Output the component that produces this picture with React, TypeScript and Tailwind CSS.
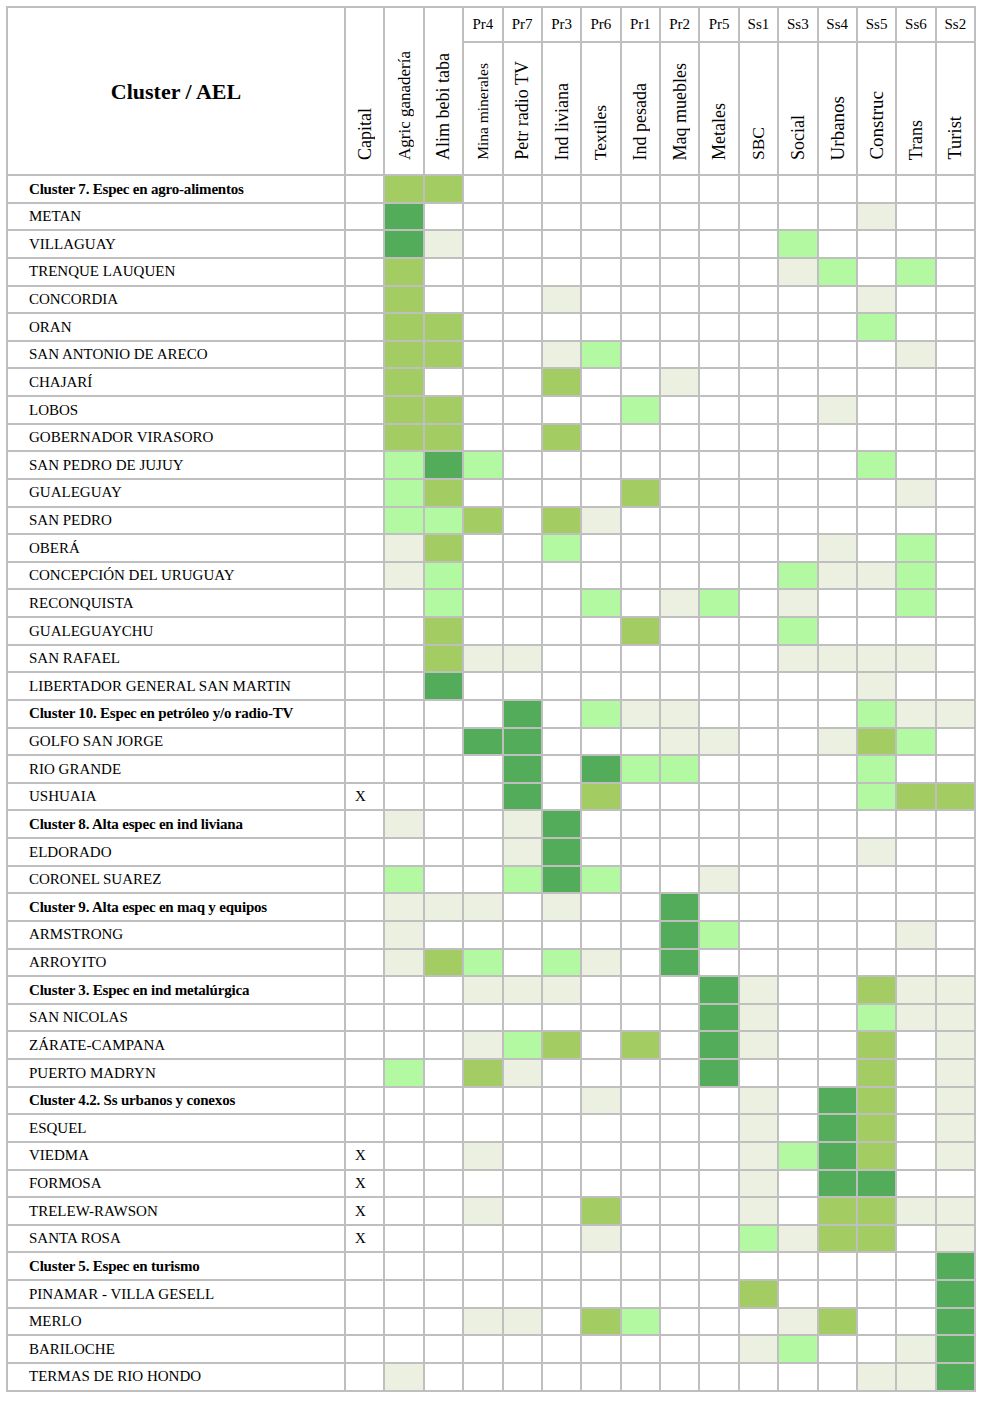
const FILL: Record<string, string> = {
  D: "bg-[#53ac59]",
  M: "bg-[#a3cd63]",
  L: "bg-[#b3f9a2]",
  P: "bg-[#ecf0e1]",
};

const KEYS = ["agr", "ali", "pr4", "pr7", "pr3", "pr6", "pr1", "pr2", "pr5", "ss1", "ss3", "ss4", "ss5", "ss6", "ss2"];

const TOP = ["Pr4", "Pr7", "Pr3", "Pr6", "Pr1", "Pr2", "Pr5", "Ss1", "Ss3", "Ss4", "Ss5", "Ss6", "Ss2"];

const SIDE = [
  { label: "Mina minerales", size: "text-[15.5px]" },
  { label: "Petr radio TV", size: "text-[18px]" },
  { label: "Ind liviana", size: "text-[18px]" },
  { label: "Textiles", size: "text-[17.5px]" },
  { label: "Ind pesada", size: "text-[18px]" },
  { label: "Maq muebles", size: "text-[18px]" },
  { label: "Metales", size: "text-[18px]" },
  { label: "SBC", size: "text-[17.5px]" },
  { label: "Social", size: "text-[18px]" },
  { label: "Urbanos", size: "text-[19px]" },
  { label: "Construc", size: "text-[19px]" },
  { label: "Trans", size: "text-[18px]" },
  { label: "Turist", size: "text-[18.5px]" },
];

// [name, capital, cells, isCluster]
const rows: [string, boolean, string, boolean][] = [
  ["Cluster 7. Espec en agro-alimentos", false, "agr:M ali:M", true],
  ["METAN", false, "agr:D ss5:P", false],
  ["VILLAGUAY", false, "agr:D ali:P ss3:L", false],
  ["TRENQUE LAUQUEN", false, "agr:M ss3:P ss4:L ss6:L", false],
  ["CONCORDIA", false, "agr:M pr3:P ss5:P", false],
  ["ORAN", false, "agr:M ali:M ss5:L", false],
  ["SAN ANTONIO DE ARECO", false, "agr:M ali:M pr3:P pr6:L ss6:P", false],
  ["CHAJARÍ", false, "agr:M pr3:M pr2:P", false],
  ["LOBOS", false, "agr:M ali:M pr1:L ss4:P", false],
  ["GOBERNADOR VIRASORO", false, "agr:M ali:M pr3:M", false],
  ["SAN PEDRO DE JUJUY", false, "agr:L ali:D pr4:L ss5:L", false],
  ["GUALEGUAY", false, "agr:L ali:M pr1:M ss6:P", false],
  ["SAN PEDRO", false, "agr:L ali:L pr4:M pr3:M pr6:P", false],
  ["OBERÁ", false, "agr:P ali:M pr3:L ss4:P ss6:L", false],
  ["CONCEPCIÓN DEL URUGUAY", false, "agr:P ali:L ss3:L ss4:P ss5:P ss6:L", false],
  ["RECONQUISTA", false, "ali:L pr6:L pr2:P pr5:L ss3:P ss6:L", false],
  ["GUALEGUAYCHU", false, "ali:M pr1:M ss3:L", false],
  ["SAN RAFAEL", false, "ali:M pr4:P pr7:P ss3:P ss4:P ss5:P ss6:P", false],
  ["LIBERTADOR GENERAL SAN MARTIN", false, "ali:D ss5:P", false],
  ["Cluster 10. Espec en petróleo y/o radio-TV", false, "pr7:D pr6:L pr1:P pr2:P ss5:L ss6:P ss2:P", true],
  ["GOLFO SAN JORGE", false, "pr4:D pr7:D pr2:P pr5:P ss4:P ss5:M ss6:L", false],
  ["RIO GRANDE", false, "pr7:D pr6:D pr1:L pr2:L ss5:L", false],
  ["USHUAIA", true, "pr7:D pr6:M ss5:L ss6:M ss2:M", false],
  ["Cluster 8. Alta espec en ind liviana", false, "agr:P pr7:P pr3:D", true],
  ["ELDORADO", false, "pr7:P pr3:D ss5:P", false],
  ["CORONEL SUAREZ", false, "agr:L pr7:L pr3:D pr6:L pr5:P", false],
  ["Cluster 9. Alta espec en maq y equipos", false, "agr:P ali:P pr4:P pr3:P pr2:D", true],
  ["ARMSTRONG", false, "agr:P pr2:D pr5:L ss6:P", false],
  ["ARROYITO", false, "agr:P ali:M pr4:L pr3:L pr6:P pr2:D", false],
  ["Cluster 3. Espec en ind metalúrgica", false, "pr4:P pr7:P pr3:P pr5:D ss1:P ss5:M ss6:P ss2:P", true],
  ["SAN NICOLAS", false, "pr5:D ss1:P ss5:L ss6:P ss2:P", false],
  ["ZÁRATE-CAMPANA", false, "pr4:P pr7:L pr3:M pr1:M pr5:D ss1:P ss5:M ss2:P", false],
  ["PUERTO MADRYN", false, "agr:L pr4:M pr7:P pr5:D ss5:M ss2:P", false],
  ["Cluster 4.2. Ss urbanos y conexos", false, "pr6:P ss1:P ss4:D ss5:M ss2:P", true],
  ["ESQUEL", false, "ss1:P ss4:D ss5:M ss2:P", false],
  ["VIEDMA", true, "pr4:P ss1:P ss3:L ss4:D ss5:M ss2:P", false],
  ["FORMOSA", true, "ss1:P ss4:D ss5:D", false],
  ["TRELEW-RAWSON", true, "pr4:P pr6:M ss1:P ss4:M ss5:M ss6:P ss2:P", false],
  ["SANTA ROSA", true, "pr6:P ss1:L ss3:P ss4:M ss5:M ss2:P", false],
  ["Cluster 5. Espec en turismo", false, "ss2:D", true],
  ["PINAMAR - VILLA GESELL", false, "ss1:M ss2:D", false],
  ["MERLO", false, "pr4:P pr7:P pr6:M pr1:L ss3:P ss4:M ss2:D", false],
  ["BARILOCHE", false, "ss1:P ss3:L ss6:P ss2:D", false],
  ["TERMAS DE RIO HONDO", false, "agr:P ss5:P ss6:P ss2:D", false],
];

function parse(cells: string) {
  const m: Record<string, string> = {};
  cells.split(" ").forEach((c) => {
    const [k, v] = c.split(":");
    m[k] = v;
  });
  return m;
}

function Rotated({ text, size }: { text: string; size: string }) {
  return (
    <div className="bg-white row-span-2 flex flex-col items-center justify-end pb-[14px]">
      <span className={`[writing-mode:vertical-rl] rotate-180 leading-none ${size}`}>{text}</span>
    </div>
  );
}

export default function App() {
  return (
    <div className="min-h-screen bg-white font-['Liberation_Serif',serif] text-black">
      <div className="ml-[6px] mt-[6px] w-[970px] bg-[#bfbfbf] p-[2px] grid gap-[2px] grid-cols-[336px_repeat(16,minmax(0,1fr))] grid-rows-[33px_131px_repeat(44,25.64px)]">
        {/* header */}
        <div className="bg-white row-span-2 flex items-center justify-center">
          <span className="text-[22px] font-bold">Cluster / AEL</span>
        </div>
        <Rotated text="Capital" size="text-[18px]" />
        <Rotated text="Agric ganadería" size="text-[17px]" />
        <Rotated text="Alim bebi taba" size="text-[18px]" />
        {TOP.map((t) => (
          <div key={t} className="bg-white flex items-center justify-center text-[15px]">
            {t}
          </div>
        ))}
        {SIDE.map((s) => (
          <div key={s.label} className="bg-white flex flex-col items-center justify-end pb-[14px]">
            <span className={`[writing-mode:vertical-rl] rotate-180 leading-none ${s.size}`}>{s.label}</span>
          </div>
        ))}

        {/* body */}
        {rows.map(([name, cap, cells, cluster]) => {
          const m = parse(cells);
          return [
            <div
              key={name}
              className={`bg-white flex items-center pl-[21px] text-[15px] whitespace-nowrap ${cluster ? "font-bold tracking-[-0.2px]" : ""}`}
            >
              {name}
            </div>,
            <div key={name + "-cap"} className="bg-white flex items-center pl-[9px] text-[15px]">
              {cap ? "X" : ""}
            </div>,
            ...KEYS.map((k) => (
              <div key={name + k} className={m[k] ? FILL[m[k]] : "bg-white"} />
            )),
          ];
        })}
      </div>
    </div>
  );
}
